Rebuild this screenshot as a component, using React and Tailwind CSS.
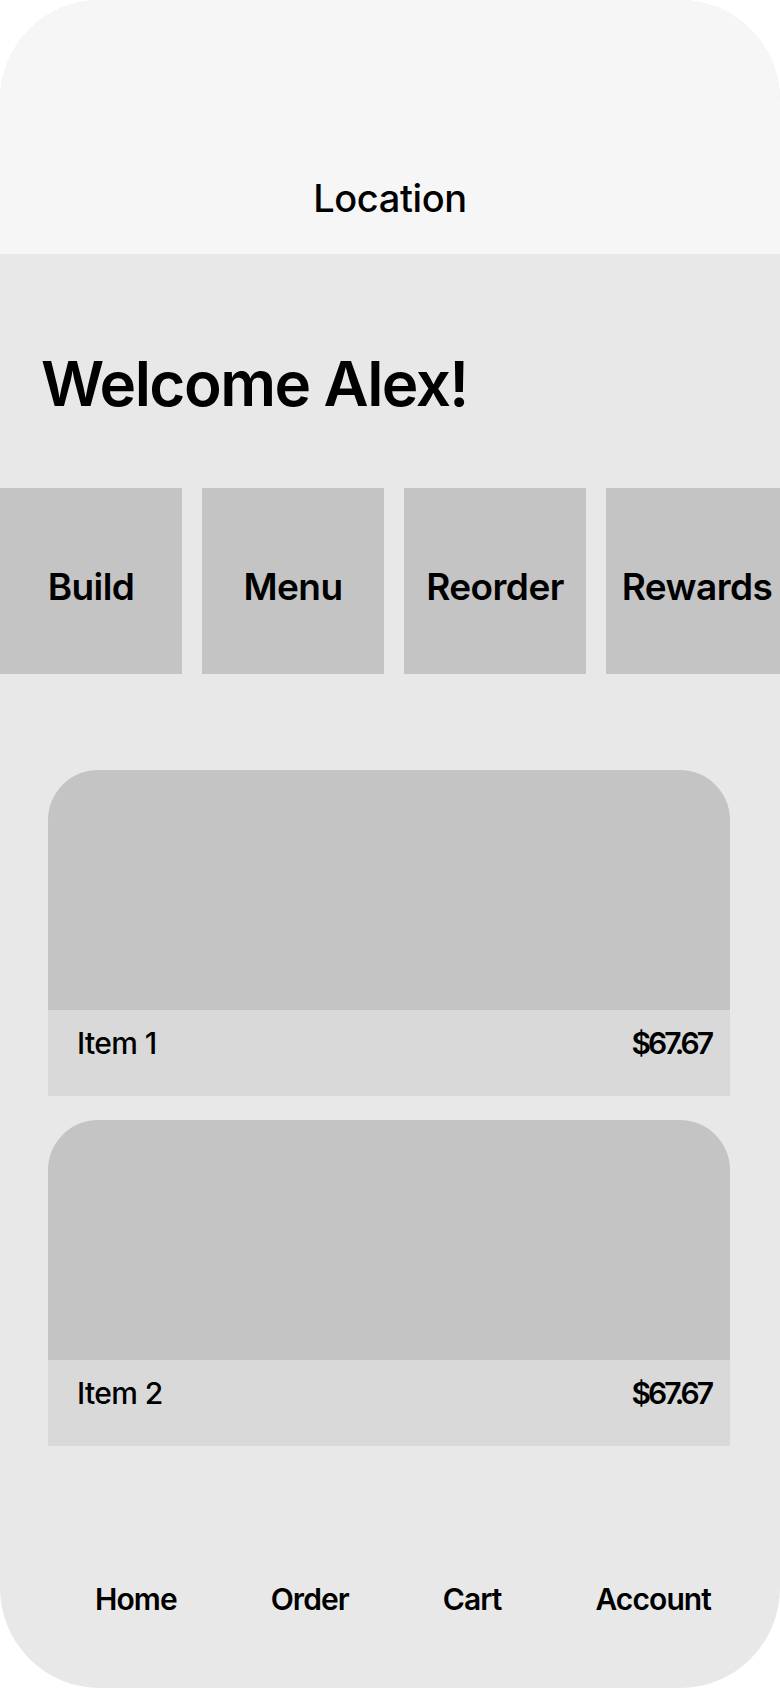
import React from 'react'

const tiles = ['Build', 'Menu', 'Reorder', 'Rewards']

const items = [
  { name: 'Item 1', price: '$67.67' },
  { name: 'Item 2', price: '$67.67' },
]

const tabs = ['Home', 'Order', 'Cart', 'Account']

function ItemCard({ item }) {
  return (
    <div className="flex w-[682px] flex-col">
      <div className="h-[240px] rounded-t-[50px] bg-[#c4c4c4]" />
      <div className="flex h-[86px] items-start justify-between bg-[#d9d9d9] pl-[29px] pr-[19px] pt-[18px] text-[30px] leading-none text-black">
        <span className="font-medium tracking-[-0.02em]">{item.name}</span>
        <span className="font-semibold tracking-[-0.1em]">{item.price}</span>
      </div>
    </div>
  )
}

export default function App() {
  return (
    <div className="h-[1688px] w-[780px] bg-white font-['Inter',sans-serif] text-black">
      <div className="flex h-full flex-col overflow-hidden rounded-[100px] bg-[#e8e8e8]">
        <header className="flex h-[254px] shrink-0 justify-center bg-[#f6f6f6] pt-[179px]">
          <h2 className="text-[38px] font-medium leading-none tracking-[-0.01em]">Location</h2>
        </header>

        <section className="pl-[41px] pt-[99px]">
          <h1 className="text-[62px] font-semibold leading-none tracking-[-0.025em]">Welcome Alex!</h1>
        </section>

        <div className="mt-[73px] flex h-[186px] shrink-0 gap-[20px] overflow-hidden">
          {tiles.map((t) => (
            <div
              key={t}
              className="flex w-[182px] shrink-0 items-center justify-center bg-[#c4c4c4] pt-[11px] text-[37px] font-semibold leading-none tracking-[-0.015em]"
            >
              {t}
            </div>
          ))}
        </div>

        <div className="mt-[96px] flex flex-col gap-[24px] pl-[48px]">
          {items.map((item) => (
            <ItemCard key={item.name} item={item} />
          ))}
        </div>

        <nav className="mt-[138px] flex justify-between pl-[95px] pr-[69px] text-[30px] font-semibold leading-none tracking-[-0.03em]">
          {tabs.map((t) => (
            <span key={t}>{t}</span>
          ))}
        </nav>
      </div>
    </div>
  )
}
